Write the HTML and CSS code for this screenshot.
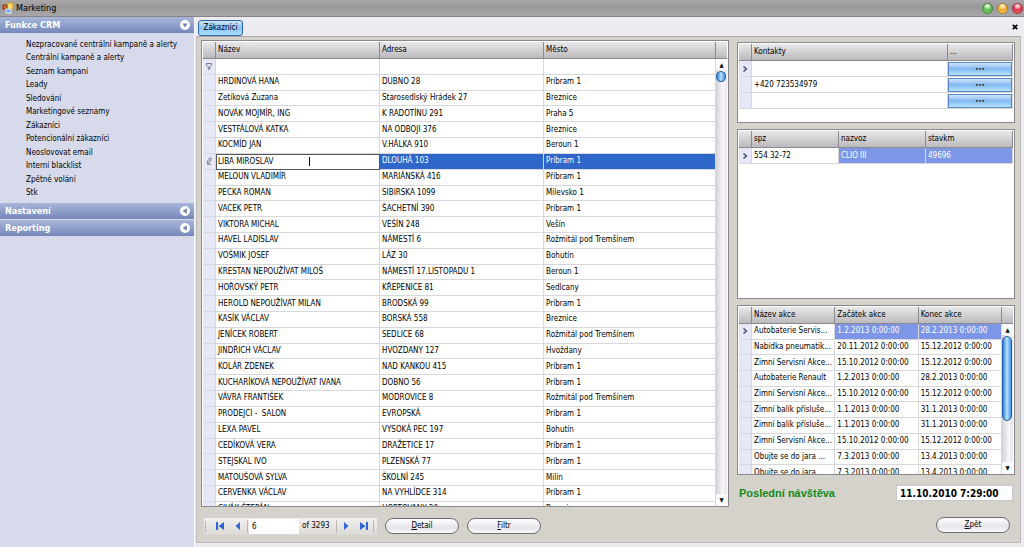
FILE: index.html
```
<!DOCTYPE html>
<html lang="cs">
<head>
<meta charset="utf-8">
<title>Marketing</title>
<link rel="stylesheet" href="styles.css">
</head>
<body>
<header class="titlebar">
  <svg class="app-icon" viewBox="0 0 12 12" aria-hidden="true"><rect x="5" y="1" width="6" height="6" fill="#f8dc70" stroke="#c79a28"/><rect x="1" y="3" width="4" height="4" fill="#e0672c" stroke="#7a3d1c"/><rect x="4" y="7" width="5" height="4" fill="#79a6ec" stroke="#e4ecfa"/></svg>
  <h1 class="title">Marketing</h1>
  <div class="window-buttons">
    <button class="orb orb-green" aria-label="Minimalizovat"></button>
    <button class="orb orb-amber" aria-label="Maximalizovat"></button>
    <button class="orb orb-red" aria-label="Zavřít okno"></button>
  </div>
</header>
<div class="workspace">
  <nav class="sidebar">
    <button class="group">Funkce CRM<svg class="chevron" viewBox="0 0 10 10" aria-hidden="true"><circle cx="5" cy="5" r="5" fill="#fff"/><path d="M2.400 3.400h5.200L5 7.400z" fill="#7084b4"/></svg></button>
    <ul class="links">
      <li><a href="#">Nezpracované centrální kampaně a alerty</a></li>
      <li><a href="#">Centrální kampaně a alerty</a></li>
      <li><a href="#">Seznam kampaní</a></li>
      <li><a href="#">Leady</a></li>
      <li><a href="#">Sledování</a></li>
      <li><a href="#">Marketingové seznamy</a></li>
      <li><a href="#">Zákazníci</a></li>
      <li><a href="#">Potencionální zákazníci</a></li>
      <li><a href="#">Neoslovovat email</a></li>
      <li><a href="#">Interní blacklist</a></li>
      <li><a href="#">Zpětné volání</a></li>
      <li><a href="#">Stk</a></li>
    </ul>
    <button class="group">Nastavení<svg class="chevron" viewBox="0 0 10 10" aria-hidden="true"><circle cx="5" cy="5" r="5" fill="#fff"/><path d="M6.800 2.300v5.400L2.600 5z" fill="#7084b4"/></svg></button>
    <button class="group">Reporting<svg class="chevron" viewBox="0 0 10 10" aria-hidden="true"><circle cx="5" cy="5" r="5" fill="#fff"/><path d="M6.800 2.300v5.400L2.600 5z" fill="#7084b4"/></svg></button>
  </nav>
  <div class="document">
    <div class="tabs">
      <button class="tab">Zákazníci</button>
      <button class="close" aria-label="Zavřít"><svg viewBox="0 0 6 6"><path d="M.8 .8l4.400 4.400M5.200 .8L.8 5.200" stroke="#000" stroke-width="1.700"/></svg></button>
    </div>
    <main class="content">
      <section class="left">
        <div class="panel customers">
          <table class="grid customers-table">
            <colgroup><col class="mark-col"><col class="name-col"><col class="name-col"><col></colgroup>
            <thead><tr><th></th><th>Název</th><th>Adresa</th><th>Město</th></tr></thead>
            <tbody>
              <tr><td><svg class="mark" viewBox="0 0 8 8" aria-hidden="true"><path d="M1.500 1.500h5v1.500L4.700 5v2.200H3.300V5L1.500 3z" fill="#e4e7f2" stroke="#5a6078" stroke-width=".8"/></svg></td><td></td><td></td><td></td></tr>
              <tr><td></td><td>HRDINOVÁ HANA</td><td>DUBNO 28</td><td>Príbram 1</td></tr>
              <tr><td></td><td>Zetíková Zuzana</td><td>Starosedlský Hrádek 27</td><td>Breznice</td></tr>
              <tr><td></td><td>NOVÁK MOJMÍR, ING</td><td>K RADOTÍNU 291</td><td>Praha 5</td></tr>
              <tr><td></td><td>VESTFÁLOVÁ KATKA</td><td>NA ODBOJI 376</td><td>Breznice</td></tr>
              <tr><td></td><td>KOCMÍD JAN</td><td>V.HÁLKA 910</td><td>Beroun 1</td></tr>
              <tr class="selected"><td><svg class="mark" viewBox="0 0 8 8" aria-hidden="true"><path d="M2.300 5L4.600 1h1.700v1L4 6H2.300zM2 7.300h4" fill="#e4e7f2" stroke="#5a6078" stroke-width=".8"/></svg></td><td class="editing"><div class="editor"><input class="name-input" aria-label="Název" value="LIBA MIROSLAV"><span class="caret"></span></div></td><td>DLOUHÁ 103</td><td>Príbram 1</td></tr>
              <tr><td></td><td>MELOUN VLADIMÍR</td><td>MARIÁNSKÁ 416</td><td>Příbram 1</td></tr>
              <tr><td></td><td>PECKA ROMAN</td><td>SIBIRSKA 1099</td><td>Milevsko 1</td></tr>
              <tr><td></td><td>VACEK PETR</td><td>ŠACHETNÍ 390</td><td>Príbram 1</td></tr>
              <tr><td></td><td>VIKTORA MICHAL</td><td>VEŠÍN 248</td><td>Vešín</td></tr>
              <tr><td></td><td>HAVEL LADISLAV</td><td>NÁMESTÍ 6</td><td>Rožmitál pod Tremšínem</td></tr>
              <tr><td></td><td>VOŠMIK JOSEF</td><td>LÁZ 30</td><td>Bohutín</td></tr>
              <tr><td></td><td>KRESTAN NEPOUŽÍVAT MILOŠ</td><td>NÁMESTÍ 17.LISTOPADU 1</td><td>Beroun 1</td></tr>
              <tr><td></td><td>HOŘOVSKÝ PETR</td><td>KŘEPENICE 81</td><td>Sedlcany</td></tr>
              <tr><td></td><td>HEROLD NEPOUŽÍVAT MILAN</td><td>BRODSKÁ 99</td><td>Príbram 1</td></tr>
              <tr><td></td><td>KASÍK VÁCLAV</td><td>BORSKÁ 558</td><td>Breznice</td></tr>
              <tr><td></td><td>JENÍCEK ROBERT</td><td>SEDLICE 68</td><td>Rožmitál pod Tremšínem</td></tr>
              <tr><td></td><td>JINDŘICH VÁCLAV</td><td>HVOZDANY 127</td><td>Hvoždany</td></tr>
              <tr><td></td><td>KOLÁR ZDENEK</td><td>NAD KANKOU 415</td><td>Príbram 1</td></tr>
              <tr><td></td><td>KUCHARÍKOVÁ NEPOUŽÍVAT IVANA</td><td>DOBNO 56</td><td>Príbram 1</td></tr>
              <tr><td></td><td>VÁVRA FRANTIŠEK</td><td>MODROVICE 8</td><td>Rožmitál pod Tremšínem</td></tr>
              <tr><td></td><td>PRODEJCI -  SALON</td><td>EVROPSKÁ</td><td>Príbram 1</td></tr>
              <tr><td></td><td>LEXA PAVEL</td><td>VYSOKÁ PEC 197</td><td>Bohutín</td></tr>
              <tr><td></td><td>CEDÍKOVÁ VERA</td><td>DRAŽETICE 17</td><td>Príbram 1</td></tr>
              <tr><td></td><td>STEJSKAL IVO</td><td>PLZENSKÁ 77</td><td>Príbram 1</td></tr>
              <tr><td></td><td>MATOUŠOVÁ SYLVA</td><td>ŠKOLNÍ 245</td><td>Milín</td></tr>
              <tr><td></td><td>CERVENKA VÁCLAV</td><td>NA VYHLÍDCE 314</td><td>Príbram 1</td></tr>
              <tr><td></td><td>CIVÁK ŠTEPÁN</td><td>HORTOVANY 20</td><td>Breznice</td></tr>
            </tbody>
          </table>
          <div class="scroll">
            <div class="scroll-head"></div>
            <button class="arrow" aria-label="Nahoru">▲</button>
            <div class="track"><div class="thumb thumb-round"></div></div>
            <button class="arrow" aria-label="Dolů">▼</button>
          </div>
        </div>
        <div class="toolbar">
          <div class="pager">
            <span class="grip"></span>
            <button class="nav" aria-label="První"><svg viewBox="0 0 10 10"><path d="M1 1h2v8H1zM9 1v8L3.500 5z"/></svg></button>
            <button class="nav" aria-label="Předchozí"><svg viewBox="0 0 10 10"><path d="M7 1v8L2.500 5z"/></svg></button>
            <span class="rule"></span>
            <input class="page" aria-label="Záznam" value="6">
            <span class="total">of 3293</span>
            <span class="rule"></span>
            <button class="nav" aria-label="Další"><svg viewBox="0 0 10 10"><path d="M3 1v8L7.500 5z"/></svg></button>
            <button class="nav" aria-label="Poslední"><svg viewBox="0 0 10 10"><path d="M7 1h2v8H7zM1 1v8L6.500 5z"/></svg></button>
            <span class="rule"></span>
          </div>
          <button class="pill"><span><u>D</u>etail</span></button>
          <button class="pill"><span><u>F</u>iltr</span></button>
        </div>
      </section>
      <section class="right">
        <div class="panel contacts">
          <table class="grid contacts-table">
            <colgroup><col class="mark-col"><col><col class="more-col"></colgroup>
            <thead><tr><th></th><th>Kontakty</th><th>...</th></tr></thead>
            <tbody>
              <tr><td><svg class="mark" viewBox="0 0 8 8" aria-hidden="true"><path d="M2.500 1.500L5.500 4l-3 2.500" fill="none" stroke="#33405f" stroke-width="1.300"/></svg></td><td></td><td class="action"><button class="more" aria-label="Upravit kontakt">•••</button></td></tr>
              <tr><td></td><td>+420 723534979</td><td class="action"><button class="more" aria-label="Upravit kontakt">•••</button></td></tr>
              <tr><td></td><td></td><td class="action"><button class="more" aria-label="Upravit kontakt">•••</button></td></tr>
            </tbody>
          </table>
        </div>
        <div class="panel cars">
          <table class="grid">
            <colgroup><col class="mark-col"><col><col><col></colgroup>
            <thead><tr><th></th><th>spz</th><th>nazvoz</th><th>stavkm</th></tr></thead>
            <tbody>
              <tr class="active"><td><svg class="mark" viewBox="0 0 8 8" aria-hidden="true"><path d="M2.500 1.500L5.500 4l-3 2.500" fill="none" stroke="#33405f" stroke-width="1.300"/></svg></td><td>554 32-72</td><td>CLIO III</td><td>49696</td></tr>
            </tbody>
          </table>
        </div>
        <div class="panel events">
          <table class="grid events-table">
            <colgroup><col class="mark-col"><col><col><col></colgroup>
            <thead><tr><th></th><th>Název akce</th><th>Začátek akce</th><th>Konec akce</th></tr></thead>
            <tbody>
              <tr class="active"><td><svg class="mark" viewBox="0 0 8 8" aria-hidden="true"><path d="M2.500 1.500L5.500 4l-3 2.500" fill="none" stroke="#33405f" stroke-width="1.300"/></svg></td><td>Autobaterie Servis...</td><td>1.2.2013 0:00:00</td><td>28.2.2013 0:00:00</td></tr>
              <tr><td></td><td>Nabídka pneumatik...</td><td>20.11.2012 0:00:00</td><td>15.12.2012 0:00:00</td></tr>
              <tr><td></td><td>Zimní Servisní Akce...</td><td>15.10.2012 0:00:00</td><td>15.12.2012 0:00:00</td></tr>
              <tr><td></td><td>Autobaterie Renault</td><td>1.2.2013 0:00:00</td><td>28.2.2013 0:00:00</td></tr>
              <tr><td></td><td>Zimní Servisní Akce...</td><td>15.10.2012 0:00:00</td><td>15.12.2012 0:00:00</td></tr>
              <tr><td></td><td>Zimní balík přísluše...</td><td>1.1.2013 0:00:00</td><td>31.1.2013 0:00:00</td></tr>
              <tr><td></td><td>Zimní balík přísluše...</td><td>1.1.2013 0:00:00</td><td>31.1.2013 0:00:00</td></tr>
              <tr><td></td><td>Zimní Servisní Akce...</td><td>15.10.2012 0:00:00</td><td>15.12.2012 0:00:00</td></tr>
              <tr><td></td><td>Obujte se do jara ...</td><td>7.3.2013 0:00:00</td><td>13.4.2013 0:00:00</td></tr>
              <tr><td></td><td>Obujte se do jara ...</td><td>7.3.2013 0:00:00</td><td>13.4.2013 0:00:00</td></tr>
            </tbody>
          </table>
          <div class="scroll">
            <div class="scroll-head"></div>
            <button class="arrow" aria-label="Nahoru">▲</button>
            <div class="track"><div class="thumb thumb-long"></div></div>
            <button class="arrow" aria-label="Dolů">▼</button>
          </div>
        </div>
        <div class="visit">
          <label class="visit-label" for="visit">Poslední návštěva</label>
          <input class="visit-date" id="visit" value="11.10.2010 7:29:00">
        </div>
        <div class="footer"><button class="pill"><span><u>Z</u>pět</span></button></div>
      </section>
    </main>
  </div>
</div>
</body>
</html>
```
FILE: styles.css
```
* { box-sizing: border-box; }

body {
  margin: 0;
  height: 100vh;
  display: flex;
  flex-direction: column;
  overflow: hidden;
  background: #eeebf0;
  color: #000;
  font: 8px/12px "DejaVu Sans Condensed", "DejaVu Sans", sans-serif;
}

button, input { font: inherit; color: inherit; padding: 0; margin: 0; border: 0; }
button { background: none; }
svg { display: block; }

/* Title bar */
.titlebar {
  flex: none;
  display: flex;
  align-items: center;
  gap: 2px;
  height: 17px;
  padding: 0 1px 0 2px;
  background: linear-gradient(#a9a7a9, #9a989a 40%, #a8a6a8);
  border-bottom: 1px solid #858388;
}
.app-icon { width: 12px; height: 12px; }
.title { flex: 1; margin: 0; font-size: 9px; font-weight: normal; }
.window-buttons { display: flex; gap: 4px; }
.orb { width: 11px; height: 11px; border-radius: 50%; border: 1px solid; }
.orb-green { border-color: #3c7e35; background: radial-gradient(circle at 50% 20%, #e8ffe0 10%, #5cb84c 50%, #8be070); }
.orb-amber { border-color: #b07a20; background: radial-gradient(circle at 50% 20%, #fff2cc 10%, #eda42c 50%, #ffdf60); }
.orb-red { border-color: #9e2836; background: radial-gradient(circle at 50% 20%, #ffdada 10%, #dc3048 50%, #ff6c74); }

.workspace { flex: 1; min-height: 0; display: flex; }

/* Navigation */
.sidebar { flex: none; width: 195px; background: #d6daea; border-right: 1px solid #f4f4fb; }
.group {
  display: flex;
  align-items: center;
  justify-content: space-between;
  width: 100%;
  height: 16px;
  margin-bottom: 1px;
  padding: 0 4px 0 5px;
  background: linear-gradient(#a9b6d9, #7488ba);
  color: #fff;
  font-size: 9px;
  font-weight: bold;
}
.chevron { width: 10px; height: 10px; }
.links {
  display: flex;
  flex-direction: column;
  height: 169px;
  margin: 0;
  padding: 4px 0 3px 26px;
  list-style: none;
}
.links li { flex: 1; display: flex; align-items: center; }
.links a { color: inherit; text-decoration: none; }

/* Tabbed document */
.document { flex: 1; min-width: 0; display: flex; flex-direction: column; padding: 0 3px 4px 1px; }
.tabs {
  flex: none;
  display: flex;
  align-items: flex-end;
  justify-content: space-between;
  height: 19px;
  padding: 0 1px 0 2px;
}
.tab {
  height: 16px;
  width: 45px;
  border: 1px solid #2f66a8;
  border-radius: 3px;
  background: linear-gradient(#cfe5fb, #8ec2f6 50%, #a8e2ff);
}
.close { width: 8px; height: 18px; }
.close svg { width: 6px; height: 6px; }
.content {
  flex: 1;
  min-height: 0;
  display: flex;
  gap: 8px;
  padding: 3px 5px 3px 4px;
  background: #d5d2cc;
  border: 1px solid #bdbabb;
  border-top-color: #a9a7a9;
}
.left { flex: 1; min-width: 0; display: flex; flex-direction: column; }
.right { flex: none; width: 278px; display: flex; flex-direction: column; gap: 6px; padding-top: 2px; }

/* Panels and grids */
.panel {
  display: flex;
  align-items: flex-start;
  min-height: 0;
  overflow: hidden;
  padding: 1px;
  border: 1px solid #8b898b;
  background: #fff;
}
.customers { flex: 1; }
.contacts { flex: none; height: 81px; }
.cars { flex: 1; }
.events { flex: none; height: 170px; }

.grid { flex: 1; width: 100%; min-width: 0; border-collapse: separate; border-spacing: 0; table-layout: fixed; }
.customers-table { height: 476px; }
.events-table { height: 174px; }
.mark-col { width: 13px; }
.name-col { width: 164px; }
.more-col { width: 65px; }

.grid th, .scroll-head {
  height: 17px;
  border-right: 1px solid #8b898d;
  border-bottom: 1px solid #8b898d;
  background: linear-gradient(#e9e8ea, #bbb9bb);
}
.grid th { padding: 0 2px; text-align: left; font-weight: normal; }
.grid td {
  height: 15px;
  padding: 0 2px;
  border-right: 1px solid #d8d7dc;
  border-bottom: 1px solid #d8d7dc;
  white-space: pre;
  overflow: hidden;
  line-height: 10px;
}
.grid td:first-child { padding: 0 2px; background: #e6e8f8; }
.mark { width: 8px; height: 8px; }
.contacts-table td, .cars td { height: 16px; }

.selected td { background: #2f66c9; color: #fff; }
.grid .editing { padding: 0; border: 1px solid #55555a; background: #fff; color: #000; }
.editor { display: flex; align-items: center; }
.name-input { width: 92px; height: 10px; padding: 0 1px; background: none; outline: 0; }
.caret { width: 1px; height: 9px; background: #000; }
.active td { background: #7d96e8; color: #fff; }
.active td:nth-child(2) { background: #fff; color: #000; }

.contacts-table .action { padding: 0; }
.more {
  display: block;
  width: 100%;
  height: 14px;
  border: 1px solid #5b86c4;
  background: linear-gradient(#cfe5fc, #84b8f0 50%, #b4e4ff);
  font-size: 6px;
  line-height: 10px;
}

/* Scroll bars */
.scroll { flex: none; align-self: stretch; display: flex; flex-direction: column; width: 11px; background: #ebe9ee; }
.scroll-head { flex: none; border-right: 0; }
.arrow { flex: none; height: 11px; background: #fbfafc; font-size: 6px; line-height: 11px; text-align: center; }
.track { flex: 1; padding-top: 1px; background: linear-gradient(90deg, #d4d2d8, #f6f4f8 60%, #e8e6ea); }
.thumb { width: 10px; border: 1px solid #1f5fae; background: linear-gradient(90deg, #2f82d8, #b8e2ff 50%, #3f94e6); }
.thumb-round { height: 11px; border-radius: 50%; }
.thumb-long { height: 85px; border-radius: 5px; }

/* Record navigation */
.toolbar { flex: none; display: flex; align-items: center; gap: 8px; height: 32px; padding: 6px 0 0 3px; }
.pager {
  display: flex;
  align-items: center;
  height: 17px;
  width: 173px;
  padding: 0 3px 0 1px;
  background: linear-gradient(#f2f0ef, #dcd9d6);
}
.grip { width: 2px; height: 11px; margin-right: 4px; border-left: 1px dotted #8a888a; }
.nav { width: 18px; height: 17px; padding: 0 4px; }
.nav svg { width: 10px; height: 10px; fill: #2d66d6; }
.page { width: 50px; height: 15px; margin-left: 1px; padding: 0 3px; background: #fff; }
.total { flex: 1; padding-left: 3px; white-space: nowrap; }
.rule { width: 1px; height: 13px; background: #bcb9b8; }
.pill {
  width: 74px;
  height: 16px;
  border: 1px solid #6e6c70;
  border-radius: 8px;
  background: linear-gradient(#fff, #e6e4ea 60%, #fafafc);
}

.visit { flex: none; display: flex; align-items: center; justify-content: space-between; height: 24px; padding: 0 2px; }
.visit-label { color: #128a18; font: bold 11px/14px "Liberation Sans", sans-serif; }
.visit-date { width: 117px; height: 16px; padding: 0 3px; background: #fff; border: 1px solid #c8c6c8; font-size: 10px; font-weight: bold; }
.footer { flex: none; display: flex; justify-content: flex-end; align-items: center; height: 28px; padding-right: 5px; }
```
